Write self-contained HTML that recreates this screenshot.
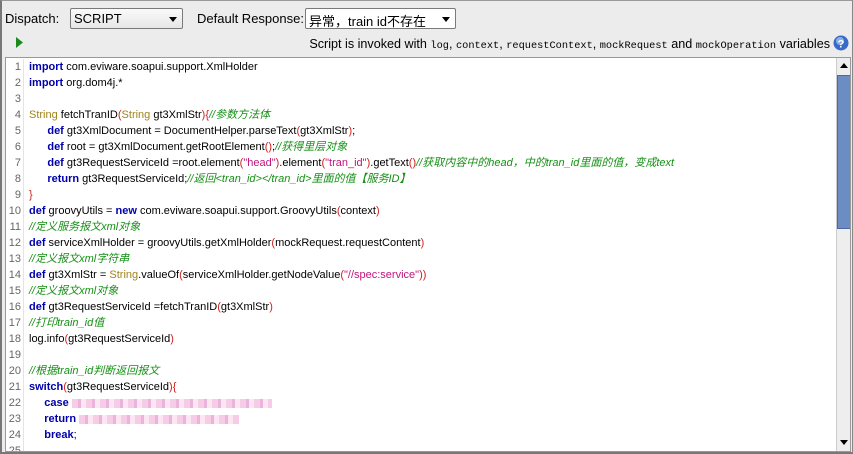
<!DOCTYPE html>
<html><head><meta charset="utf-8"><style>
*{margin:0;padding:0;box-sizing:border-box}
body{width:853px;height:454px;background:#ececec;font-family:"Liberation Sans","Noto Sans CJK SC",sans-serif;font-size:12px;color:#000;position:relative;overflow:hidden}
.frame{position:absolute;left:0;top:0;width:853px;height:454px;border-left:2px solid #777;border-top:1px solid #999;border-right:1px solid #888;border-bottom:2px solid #777;z-index:5}
.lbl{position:absolute;font-size:13px}
.sel{position:absolute;background:#fff;border:1px solid #7a7a7a;border-radius:2px;height:21px;font-size:13px;padding:2px 3px;background:linear-gradient(#fafafa,#e6e6e6)}
.sel2{background:#fff}
.arr{position:absolute;right:5px;top:8px;width:0;height:0;border-left:4px solid transparent;border-right:4px solid transparent;border-top:5px solid #000}
.info{position:absolute;right:23px;top:37px;font-size:12.6px}
.m{font-family:"Liberation Mono",monospace;font-size:10.3px}
.ed{position:absolute;left:5px;top:57px;width:846px;height:395px;background:#fff;border:1px solid #999;overflow:hidden}
.ln{position:absolute;left:0;top:1px;width:18px;color:#666;text-align:right;font-size:11px;line-height:16px;border-right:1px solid #e4e4e4;padding-right:2px;height:395px}
.code{position:absolute;left:23px;top:1px;font-size:11px;line-height:16px;white-space:pre;font-family:"Liberation Sans","Noto Sans CJK SC",sans-serif}
.k{color:#00a;font-weight:bold}.t{color:#a0841c}.p{color:#d02020}.s{color:#c0147c}.c{color:#169016;font-style:italic}
.sb{position:absolute;left:830px;top:0;width:15px;height:393px;background:#eee;border-left:1px solid #ccc}
.th{position:absolute;left:0;top:17px;width:14px;height:154px;background:#6c8cc4;border:1px solid #4a6aa4}
.blur{display:inline-block;height:9px;background:repeating-linear-gradient(90deg,#f3c0e0 0 6px,#e8a0d0 6px 9px,#fbe0f0 9px 14px);opacity:.8;vertical-align:middle}
</style></head><body>
<div class="frame"></div>
<div class="lbl" style="left:5px;top:11px">Dispatch:</div>
<div class="sel" style="left:70px;top:8px;width:113px">SCRIPT<span class="arr"></span></div>
<div class="lbl" style="left:197px;top:11px">Default Response:</div>
<div class="sel sel2" style="left:305px;top:8px;width:151px">异常，train id不存在<span class="arr"></span></div>
<svg style="position:absolute;left:15px;top:37px" width="9" height="11"><path d="M1 0L8 5.5L1 11Z" fill="#1a8a1a"/></svg>
<div class="info">Script is invoked with <span class="m">log</span>, <span class="m">context</span>, <span class="m">requestContext</span>, <span class="m">mockRequest</span> and <span class="m">mockOperation</span> variables</div>
<svg style="position:absolute;left:833px;top:35px" width="16" height="16"><circle cx="8" cy="8" r="7.5" fill="#3a6ac8"/><circle cx="7" cy="6" r="4" fill="#8ab0ea"/><text x="8" y="12.5" font-size="11" font-weight="bold" fill="#fff" text-anchor="middle" font-family="Liberation Sans">?</text></svg>
<div class="ed">
<div class="ln">1<br>2<br>3<br>4<br>5<br>6<br>7<br>8<br>9<br>10<br>11<br>12<br>13<br>14<br>15<br>16<br>17<br>18<br>19<br>20<br>21<br>22<br>23<br>24<br>25</div>
<div class="code"><span class="k">import</span> com.eviware.soapui.support.XmlHolder
<span class="k">import</span> org.dom4j.*

<span class="t">String</span> fetchTranID<span class="p">(</span><span class="t">String</span> gt3XmlStr<span class="p">){</span><span class="c">//参数方法体</span>
      <span class="k">def</span> gt3XmlDocument = DocumentHelper.parseText<span class="p">(</span>gt3XmlStr<span class="p">)</span>;
      <span class="k">def</span> root = gt3XmlDocument.getRootElement<span class="p">()</span>;<span class="c">//获得里层对象</span>
      <span class="k">def</span> gt3RequestServiceId =root.element<span class="p">(</span><span class="s">"head"</span><span class="p">)</span>.element<span class="p">(</span><span class="s">"tran_id"</span><span class="p">)</span>.getText<span class="p">()</span><span class="c">//获取内容中的head，中的tran_id里面的值，变成text</span>
      <span class="k">return</span> gt3RequestServiceId;<span class="c">//返回&lt;tran_id&gt;&lt;/tran_id&gt;里面的值【服务ID】</span>
<span class="p">}</span>
<span class="k">def</span> groovyUtils = <span class="k">new</span> com.eviware.soapui.support.GroovyUtils<span class="p">(</span>context<span class="p">)</span>
<span class="c">//定义服务报文xml对象</span>
<span class="k">def</span> serviceXmlHolder = groovyUtils.getXmlHolder<span class="p">(</span>mockRequest.requestContent<span class="p">)</span>
<span class="c">//定义报文xml字符串</span>
<span class="k">def</span> gt3XmlStr = <span class="t">String</span>.valueOf<span class="p">(</span>serviceXmlHolder.getNodeValue<span class="p">(</span><span class="s">"//spec:service"</span><span class="p">))</span>
<span class="c">//定义报文xml对象</span>
<span class="k">def</span> gt3RequestServiceId =fetchTranID<span class="p">(</span>gt3XmlStr<span class="p">)</span>
<span class="c">//打印train_id值</span>
log.info<span class="p">(</span>gt3RequestServiceId<span class="p">)</span>

<span class="c">//根据train_id判断返回报文</span>
<span class="k">switch</span><span class="p">(</span>gt3RequestServiceId<span class="p">){</span>
     <span class="k">case</span> <span class="blur" style="width:200px"></span>
     <span class="k">return</span> <span class="blur" style="width:160px"></span>
     <span class="k">break</span>;
</div>
<div class="sb"><svg style="position:absolute;left:3px;top:5px" width="8" height="5"><path d="M0 5L4 0L8 5Z"/></svg><div class="th"></div><svg style="position:absolute;left:3px;top:382px" width="8" height="5"><path d="M0 0L4 5L8 0Z"/></svg></div>
</div>
</body></html>
